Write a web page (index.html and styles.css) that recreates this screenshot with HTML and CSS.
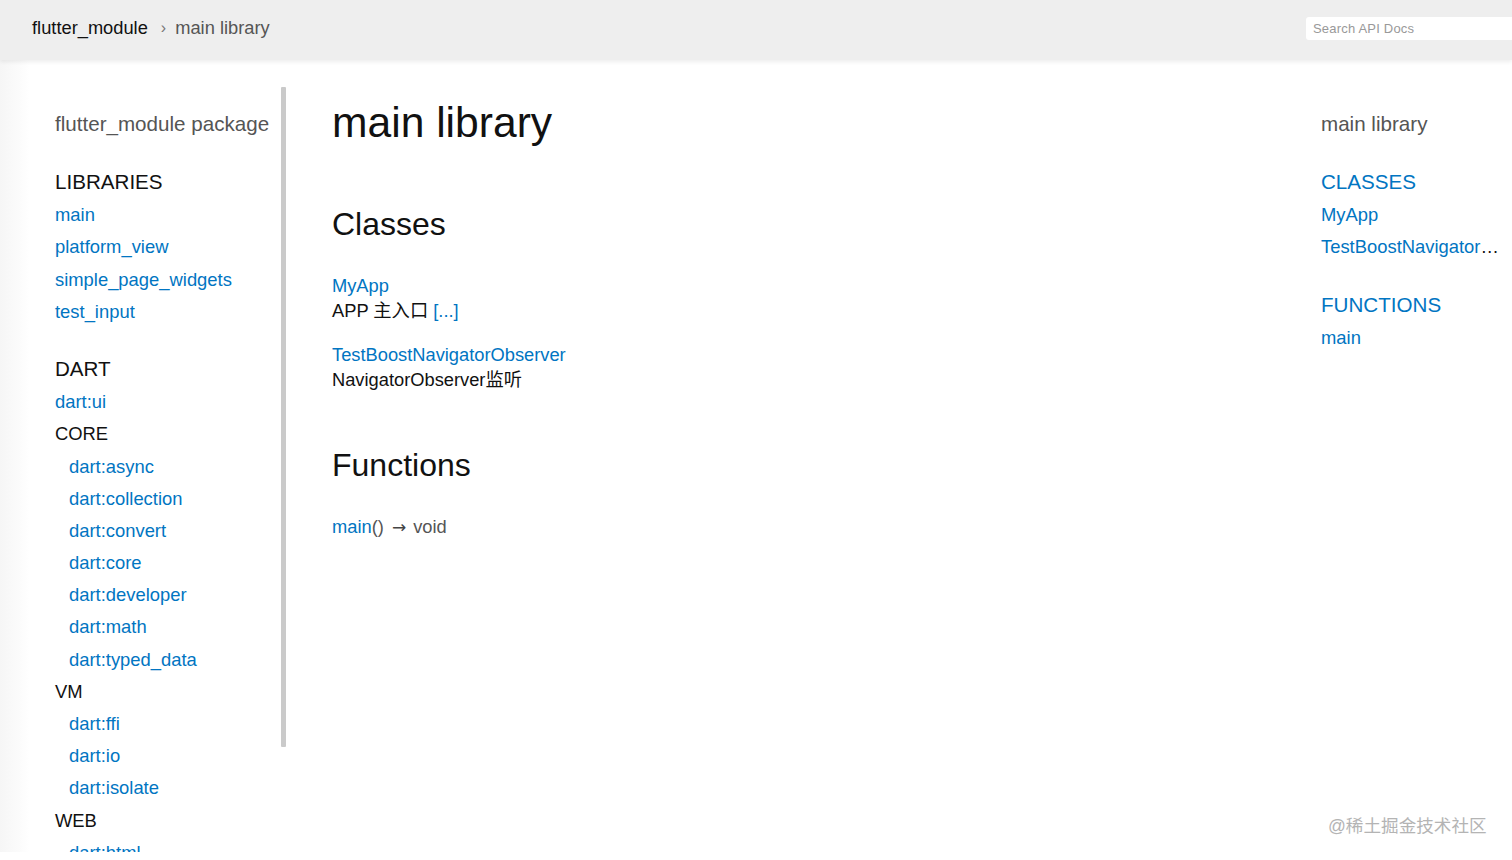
FILE: index.html
```html
<!DOCTYPE html>
<html lang="en">
<head>
<meta charset="utf-8">
<title>main library - Dart API</title>
<link rel="stylesheet" href="styles.css">
</head>
<body>
<header class="topbar">
  <ol class="breadcrumbs">
    <li class="crumb crumb-root">flutter_module</li>
    <li class="crumb-sep">›</li>
    <li class="crumb crumb-self">main library</li>
  </ol>
  <input class="search" type="text" placeholder="Search API Docs">
</header>

<div class="layout">
  <nav class="sidebar-left">
    <div class="scroll-thumb"></div>
    <div class="side-title">flutter_module package</div>
    <ol class="side-list">
      <li class="side-head">LIBRARIES</li>
      <li><a href="#">main</a></li>
      <li><a href="#">platform_view</a></li>
      <li><a href="#">simple_page_widgets</a></li>
      <li><a href="#">test_input</a></li>
    </ol>
    <ol class="side-list">
      <li class="side-head">DART</li>
      <li><a href="#">dart:ui</a></li>
      <li class="side-sub">CORE</li>
      <li class="indent"><a href="#">dart:async</a></li>
      <li class="indent"><a href="#">dart:collection</a></li>
      <li class="indent"><a href="#">dart:convert</a></li>
      <li class="indent"><a href="#">dart:core</a></li>
      <li class="indent"><a href="#">dart:developer</a></li>
      <li class="indent"><a href="#">dart:math</a></li>
      <li class="indent"><a href="#">dart:typed_data</a></li>
      <li class="side-sub">VM</li>
      <li class="indent"><a href="#">dart:ffi</a></li>
      <li class="indent"><a href="#">dart:io</a></li>
      <li class="indent"><a href="#">dart:isolate</a></li>
      <li class="side-sub">WEB</li>
      <li class="indent"><a href="#">dart:html</a></li>
      <li class="indent"><a href="#">dart:indexed_db</a></li>
    </ol>
  </nav>

  <main class="content">
    <h1 class="page-title">main library</h1>

    <section class="summary">
      <h2 class="section-title">Classes</h2>
      <dl class="items">
        <dt><a href="#">MyApp</a></dt>
        <dd>APP 主入口 <a href="#">[...]</a></dd>
        <dt><a href="#">TestBoostNavigatorObserver</a></dt>
        <dd>NavigatorObserver监听</dd>
      </dl>
    </section>

    <section class="summary">
      <h2 class="section-title">Functions</h2>
      <dl class="items items-fn">
        <dt><a href="#">main</a><span class="sig">() <span class="arrow">→</span> void</span></dt>
      </dl>
    </section>
  </main>

  <nav class="sidebar-right">
    <div class="side-title">main library</div>
    <ol class="side-list">
      <li class="side-head link-head"><a href="#">CLASSES</a></li>
      <li><a href="#">MyApp</a></li>
      <li><a href="#">TestBoostNavigatorObserver</a></li>
    </ol>
    <ol class="side-list">
      <li class="side-head link-head"><a href="#">FUNCTIONS</a></li>
      <li><a href="#">main</a></li>
    </ol>
  </nav>
</div>

<div class="watermark">@稀土掘金技术社区</div>
</body>
</html>
```

FILE: styles.css
```css
html, body {
  margin: 0;
  padding: 0;
  background: #fff;
}

body {
  font-family: "Liberation Sans", "Noto Sans CJK SC", Arial, sans-serif;
  color: #111;
  overflow: hidden;
  height: 860px;
}

a {
  color: #0175c2;
  text-decoration: none;
}

/* Header */
.topbar {
  height: 60px;
  background: #eeeeee;
  display: flex;
  align-items: center;
  justify-content: space-between;
  box-shadow: 0 2px 4px rgba(0, 0, 0, 0.07);
  position: relative;
  z-index: 2;
}

.breadcrumbs {
  list-style: none;
  margin: 0;
  padding: 0 0 4px 32px;
  display: flex;
  align-items: center;
  font-size: 18.3px;
}

.crumb-root {
  color: #111;
}

.crumb-sep {
  color: #777;
  font-size: 16px;
  margin: 0 9px 0 13px;
}

.crumb-self {
  color: #555;
}

.search {
  width: 206px;
  height: 23px;
  box-sizing: border-box;
  margin: 0 0 4px 0;
  border: none;
  border-radius: 3px 0 0 3px;
  background: #fff;
  padding: 0 0 0 7px;
  font-family: "Liberation Sans", Arial, sans-serif;
  font-size: 13px;
  color: #333;
  outline: none;
}

.search::placeholder {
  color: #999;
  letter-spacing: 0.2px;
}

/* Layout */
.layout {
  display: flex;
  align-items: flex-start;
}

.sidebar-left {
  position: relative;
  width: 245px;
  height: 744px;
  overflow: hidden;
  flex: none;
  padding: 48px 0 0 55px;
  background: linear-gradient(to right, #f6f6f6 0, #fbfbfb 18px, #fff 30px);
}

.scroll-thumb {
  position: absolute;
  left: 281px;
  top: 27px;
  width: 5px;
  height: 660px;
  background: #cacaca;
  border-radius: 1px;
}

.side-title {
  font-size: 20.6px;
  line-height: 32px;
  color: #555;
  white-space: nowrap;
}

.side-list {
  list-style: none;
  margin: 26px 0 0 0;
  padding: 0;
}

.side-list li {
  font-size: 18.4px;
  line-height: 32.2px;
  height: 32.2px;
  white-space: nowrap;
}

.side-list li:not(.side-head) {
  padding-top: 1px;
  height: 31.2px;
  line-height: 32.2px;
}

.side-list li.side-head {
  font-size: 20.6px;
  color: #111;
}

.side-list li.side-sub {
  color: #111;
}

.side-list li.indent {
  padding-left: 14px;
}

/* Main */
.content {
  flex: 1;
  padding: 37px 0 0 32px;
  min-width: 0;
}

.page-title {
  margin: 0;
  font-size: 42.6px;
  line-height: 50px;
  font-weight: 400;
  color: #111;
}

.summary {
  margin-top: 57px;
}

.summary + .summary {
  margin-top: 53px;
}

.section-title {
  margin: 0;
  font-size: 32px;
  line-height: 40px;
  font-weight: 400;
  color: #111;
}

.items {
  margin: 29px 0 0 0;
}

.items-fn {
  margin-top: 29px;
}

.items dt {
  font-size: 18.3px;
  line-height: 25px;
}

.items dd {
  margin: 0 0 19px 0;
  font-size: 18.3px;
  line-height: 25px;
  color: #111;
}

.items dd:last-child {
  margin-bottom: 0;
}

.sig {
  color: #555;
}

.arrow {
  font-family: "DejaVu Sans", sans-serif;
  font-size: 17px;
  color: #444;
  margin: 0 2px 0 3px;
}

/* Right sidebar */
.sidebar-right {
  width: 181px;
  flex: none;
  padding: 48px 10px 0 0;
}

.sidebar-right .side-list li {
  overflow: hidden;
  text-overflow: ellipsis;
}

.sidebar-right .side-list li.link-head a {
  color: #0175c2;
}

/* Watermark overlay */
.watermark {
  position: absolute;
  left: 1328px;
  top: 814px;
  font-size: 17.6px;
  line-height: 24px;
  color: #b4b4b4;
}
```
